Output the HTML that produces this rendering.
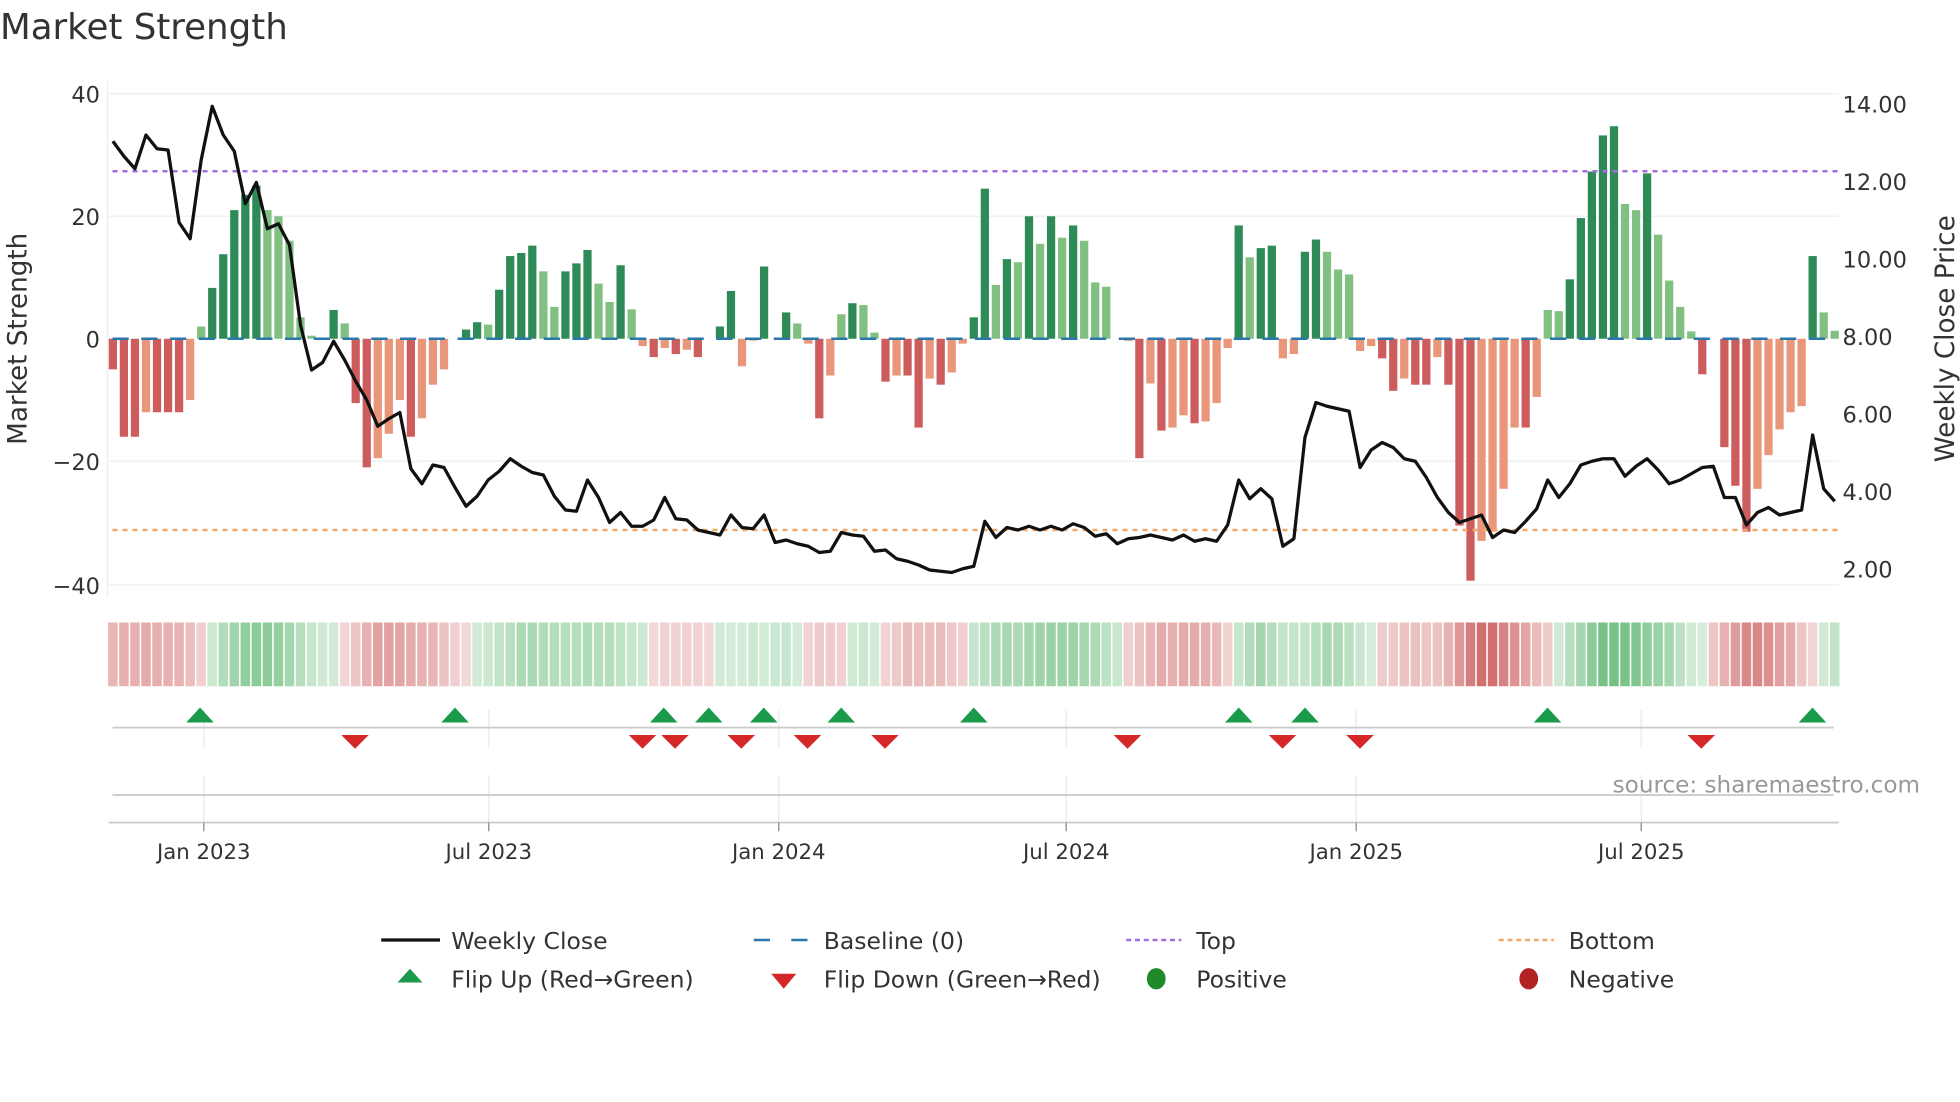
<!DOCTYPE html>
<html><head><meta charset="utf-8"><style>
html,body{margin:0;padding:0;background:#fff;}
svg{display:block;font-family:"DejaVu Sans","Liberation Sans",sans-serif;}
</style></head><body>
<svg id="s" width="1960" height="1102" viewBox="0 0 1568 881.6" xmlns="http://www.w3.org/2000/svg">
<text x="0" y="31" font-size="28.5" fill="#333">Market Strength</text>
<g stroke="#eef0f3" stroke-width="1.2">
<line x1="87" y1="75" x2="1471" y2="75"/><line x1="87" y1="173" x2="1471" y2="173"/>
<line x1="87" y1="369" x2="1471" y2="369"/><line x1="87" y1="468" x2="1471" y2="468"/>
<line x1="86" y1="65" x2="86" y2="478"/>
</g>
<g font-size="18" fill="#333" text-anchor="end">
<text x="80" y="82">40</text><text x="80" y="180">20</text><text x="80" y="278">0</text>
<text x="80" y="376">−20</text><text x="80" y="475">−40</text>
</g>
<g font-size="18" fill="#333">
<text x="1474" y="90">14.00</text><text x="1474" y="152">12.00</text><text x="1474" y="214">10.00</text>
<text x="1474" y="276">8.00</text><text x="1474" y="338">6.00</text><text x="1474" y="400">4.00</text><text x="1474" y="462">2.00</text>
</g>
<text transform="translate(21,271) rotate(-90)" font-size="21" fill="#333" text-anchor="middle">Market Strength</text>
<text transform="translate(1563,271) rotate(-90)" font-size="21" fill="#333" text-anchor="middle">Weekly Close Price</text>
<g id="bars"></g>
<line x1="90" y1="271" x2="1470" y2="271" stroke="#2a78ab" stroke-width="2" stroke-dasharray="13,10"/>
<line x1="90" y1="137" x2="1470" y2="137" stroke="#a36ee0" stroke-width="2" stroke-dasharray="4,4"/>
<line x1="90" y1="424" x2="1470" y2="424" stroke="#f0a868" stroke-width="2" stroke-dasharray="4,4"/>
<polyline id="price" fill="none" stroke="#111" stroke-width="2.6" stroke-linejoin="round"/>
<g id="strip"></g>
<g stroke="#e6e9ee" stroke-width="1">
<line x1="163" y1="568" x2="163" y2="598"/><line x1="391" y1="568" x2="391" y2="598"/><line x1="623" y1="568" x2="623" y2="598"/><line x1="853" y1="568" x2="853" y2="598"/><line x1="1085" y1="568" x2="1085" y2="598"/><line x1="1313" y1="568" x2="1313" y2="598"/>
<line x1="163" y1="620" x2="163" y2="658"/><line x1="391" y1="620" x2="391" y2="658"/><line x1="623" y1="620" x2="623" y2="658"/><line x1="853" y1="620" x2="853" y2="658"/><line x1="1085" y1="620" x2="1085" y2="658"/><line x1="1313" y1="620" x2="1313" y2="658"/>
</g>
<line x1="90" y1="582" x2="1467" y2="582" stroke="#ccc" stroke-width="1.5"/>
<line x1="90" y1="636" x2="1467" y2="636" stroke="#ccc" stroke-width="1.5"/>
<line x1="87" y1="658" x2="1471" y2="658" stroke="#ccc" stroke-width="1.5"/>
<g stroke="#999" stroke-width="1.2">
<line x1="163" y1="658" x2="163" y2="665"/><line x1="391" y1="658" x2="391" y2="665"/><line x1="623" y1="658" x2="623" y2="665"/><line x1="853" y1="658" x2="853" y2="665"/><line x1="1085" y1="658" x2="1085" y2="665"/><line x1="1313" y1="658" x2="1313" y2="665"/>
</g>
<g id="marks"></g>
<text x="1536" y="634" font-size="18.5" fill="#999" text-anchor="end">source: sharemaestro.com</text>
<g font-size="17" fill="#333" text-anchor="middle">
<text x="163" y="687">Jan 2023</text><text x="391" y="687">Jul 2023</text><text x="623" y="687">Jan 2024</text>
<text x="853" y="687">Jul 2024</text><text x="1085" y="687">Jan 2025</text><text x="1313" y="687">Jul 2025</text>
</g>
<g font-size="18.8" fill="#333">
<line x1="305" y1="752" x2="352" y2="752" stroke="#111" stroke-width="2.6"/>
<text x="361" y="759">Weekly Close</text>
<line x1="603" y1="752" x2="646" y2="752" stroke="#2a78ab" stroke-width="2" stroke-dasharray="13,17"/>
<text x="659" y="759">Baseline (0)</text>
<line x1="901" y1="752" x2="945" y2="752" stroke="#a36ee0" stroke-width="2" stroke-dasharray="4,3"/>
<text x="957" y="759">Top</text>
<line x1="1199" y1="752" x2="1243" y2="752" stroke="#f0a868" stroke-width="2" stroke-dasharray="4,3"/>
<text x="1255" y="759">Bottom</text>
<polygon points="328,775 338,786 318,786" fill="#1a9a4a"/>
<text x="361" y="790">Flip Up (Red→Green)</text>
<polygon points="617,779 637,779 627,791" fill="#d62728"/>
<text x="659" y="790">Flip Down (Green→Red)</text>
<ellipse cx="925" cy="783" rx="7.5" ry="8.5" fill="#1f8a2a"/>
<text x="957" y="790">Positive</text>
<ellipse cx="1223" cy="783" rx="7.5" ry="8.5" fill="#b22222"/>
<text x="1255" y="790">Negative</text>
</g>
</svg>
<script>
var v=[-5,-16,-16,-12,-12,-12,-12,-10,2,8.3,13.8,21,23.5,25,21,20,16,3.5,0.5,0,4.7,2.5,-10.5,-21,-19.5,-15.5,-10,-16,-13,-7.5,-5,0,1.5,2.7,2.3,8,13.5,14,15.2,11,5.2,11,12.3,14.5,9,6,12,4.8,-1.2,-3,-1.5,-2.5,-1.8,-3,0,2,7.8,-4.5,-0.3,11.8,0,4.3,2.5,-0.8,-13,-6,4,5.8,5.5,1,-7,-6,-6,-14.5,-6.5,-7.5,-5.5,-0.8,3.5,24.5,8.8,13,12.5,20,15.5,20,16.5,18.5,16,9.2,8.5,0,-0.3,-19.5,-7.3,-15,-14.5,-12.5,-13.8,-13.5,-10.5,-1.5,18.5,13.3,14.8,15.2,-3.2,-2.5,14.2,16.2,14.2,11.3,10.5,-2,-1.2,-3.2,-8.5,-6.5,-7.5,-7.5,-3,-7.5,-30.5,-39.5,-33,-31.5,-24.5,-14.5,-14.5,-9.5,4.7,4.5,9.7,19.7,27.3,33.2,34.7,22,21,27,17,9.5,5.2,1.2,-5.8,0,-17.7,-24,-31.5,-24.5,-19,-14.8,-12,-11,13.5,4.3,1.3];
var p=[113,125,135,108,119,120,178,191,128,85,108,121,163,146,183,179,196,260,296,290,273,288,305,320,341,335,330,375,387,372,374,390,405,397,384,377,367,373,378,380,397,408,409,384,398,418,410,421,421,416,398,415,416,424,426,428,412,422,423,412,434,432,435,437,442,441,426,428,429,441,440,447,449,452,456,457,458,455,453,417,430,422,424,421,424,421,424,419,422,429,427,435,431,430,428,430,432,428,433,431,433,420,384,399,391,399,437,431,350,322,325,327,329,374,360,354,358,367,369,382,398,410,418,415,412,430,424,426,417,407,384,398,387,372,369,367,367,381,373,367,376,387,384,379,374,373,398,398,420,410,406,412,410,408,348,391,401];
var ns="http://www.w3.org/2000/svg",B=document.getElementById('bars'),S=document.getElementById('strip'),M=document.getElementById('marks');
function el(t,a,par){var e=document.createElementNS(ns,t);for(var k in a)e.setAttribute(k,a[k]);par.appendChild(e);return e;}
var pts=[];
for(var i=0;i<v.length;i++){
 var x=87+8.83*i,val=v[i];
 var prev=i>0?v[i-1]:0, strong=Math.abs(val)>=Math.abs(prev);
 if(val!==0){
  var h=Math.abs(val)*4.9,c;
  if(val>0)c=strong?'#2e8b57':'#80c080';else c=strong?'#cd5c5c':'#e9967a';
  el('rect',{x:x,y:val>0?271-h:271,width:6.6,height:h,fill:c},B);
 }
 var sm=0,n=0;for(var j=Math.max(0,i-2);j<=Math.min(v.length-1,i+1);j++){sm+=v[j];n++;}sm/=n;
 var a=0.22+0.6*Math.min(1,Math.abs(sm)/32);
 el('rect',{x:x-0.5,y:498,width:7.6,height:51,fill:sm>=0?'#4caf60':'#c85050','fill-opacity':a},S);
 pts.push((x+3.3)+','+p[i]);
}
document.getElementById('price').setAttribute('points',pts.join(' '));
[160,364,531,567,611,673,779,991,1044,1238,1450].forEach(function(x){el('polygon',{points:x+',566 '+(x+11)+',578 '+(x-11)+',578',fill:'#1a9a4a'},M);});
[284,514,540,593,646,708,902,1026,1088,1361].forEach(function(x){el('polygon',{points:(x-11)+',588 '+(x+11)+',588 '+x+',599',fill:'#d62728'},M);});
</script>
</body></html>
